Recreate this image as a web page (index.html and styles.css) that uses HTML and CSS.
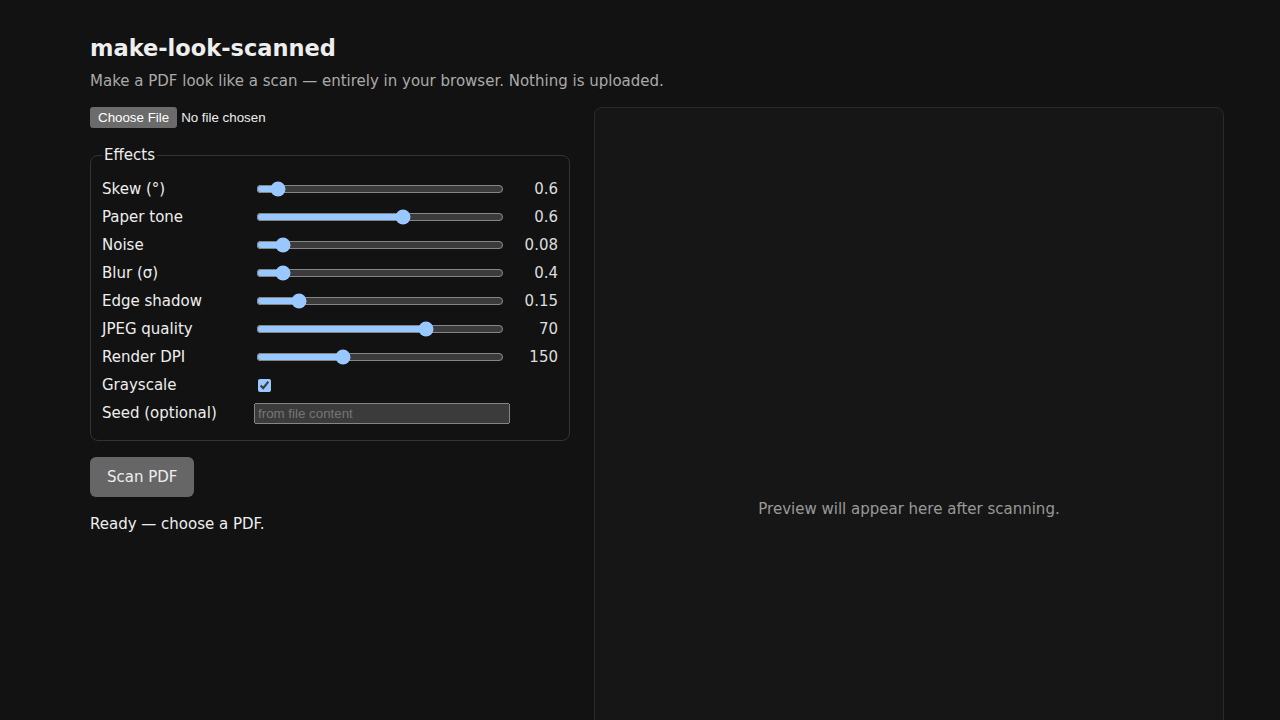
FILE: index.html
```html
<!DOCTYPE html>
<html lang="en">
<head>
  <meta charset="UTF-8">
  <title>make-look-scanned</title>
  <link rel="stylesheet" href="styles.css">
</head>
<body>
  <div class="page">
    <h1>make-look-scanned</h1>
    <p class="sub">Make a PDF look like a scan — entirely in your browser. Nothing is uploaded.</p>

    <div class="layout">
      <div class="controls">
        <input type="file" id="file" accept="application/pdf">

        <fieldset>
          <legend>Effects</legend>
          <div class="grid">
            <label for="skew">Skew (°)</label>
            <input type="range" id="skew" min="0" max="10" step="0.1" value="0.6">
            <span class="val">0.6</span>

            <label for="tone">Paper tone</label>
            <input type="range" id="tone" min="0" max="1" step="0.05" value="0.6">
            <span class="val">0.6</span>

            <label for="noise">Noise</label>
            <input type="range" id="noise" min="0" max="1" step="0.01" value="0.08">
            <span class="val">0.08</span>

            <label for="blur">Blur (σ)</label>
            <input type="range" id="blur" min="0" max="5" step="0.1" value="0.4">
            <span class="val">0.4</span>

            <label for="shadow">Edge shadow</label>
            <input type="range" id="shadow" min="0" max="1" step="0.01" value="0.15">
            <span class="val">0.15</span>

            <label for="jpeg">JPEG quality</label>
            <input type="range" id="jpeg" min="0" max="100" step="1" value="70">
            <span class="val">70</span>

            <label for="dpi">Render DPI</label>
            <input type="range" id="dpi" min="72" max="300" step="1" value="150">
            <span class="val">150</span>

            <label for="gray">Grayscale</label>
            <div><input type="checkbox" id="gray" checked></div>
            <span></span>

            <label for="seed">Seed (optional)</label>
            <input type="text" id="seed" class="seed" placeholder="from file content">
            <span></span>
          </div>
        </fieldset>

        <div><button class="scan">Scan PDF</button></div>
        <p class="status">Ready — choose a PDF.</p>
      </div>

      <div class="preview">
        <p>Preview will appear here after scanning.</p>
      </div>
    </div>
  </div>
</body>
</html>
```

FILE: styles.css
```css
:root {
  color-scheme: dark;
}

body {
  margin: 0;
  background: #121212;
  color: #eee;
  font-family: "DejaVu Sans", system-ui, sans-serif;
  font-size: 15px;
}

.page {
  padding: 34px 0 0 90px;
}

h1 {
  margin: 0 0 10px;
  font-size: 22.5px;
  line-height: 28px;
}

.sub {
  margin: 0 0 16px;
  color: #aaa;
  line-height: 19px;
}

.layout {
  display: grid;
  grid-template-columns: 480px 630px;
  gap: 24px;
  align-items: start;
}

.controls {
  display: flex;
  flex-direction: column;
  align-items: stretch;
}

.controls input[type=file] {
  margin: 0 0 18px;
}

fieldset {
  margin: 0;
  padding: 11px 11px 13px;
  border: 1px solid #333;
  border-radius: 8px;
}

legend {
  padding: 0 2px;
}

.grid {
  display: grid;
  grid-template-columns: 152px 256px 1fr;
  grid-auto-rows: 28px;
  align-items: center;
}

.grid input[type=range] {
  width: 248px;
  margin: 0 0 0 2px;
}

.grid input[type=checkbox] {
  display: block;
  margin: 0 0 0 4px;
}

.val {
  text-align: right;
  color: #ddd;
}

.seed {
  width: 256px;
  box-sizing: border-box;
}

.scan {
  margin-top: 16px;
  padding: 10px 17px;
  font-family: inherit;
  font-size: 15px;
  line-height: 20px;
  background: #666;
  color: #eee;
  border: none;
  border-radius: 6px;
  cursor: pointer;
}

.status {
  margin: 18px 0 0;
  line-height: 19px;
}

.preview {
  min-height: 804px;
  box-sizing: border-box;
  background: #161616;
  border: 1px solid #2a2a2a;
  border-radius: 8px;
  display: flex;
  justify-content: center;
  align-items: center;
}

.preview p {
  margin: 0;
  color: #999;
}
```
